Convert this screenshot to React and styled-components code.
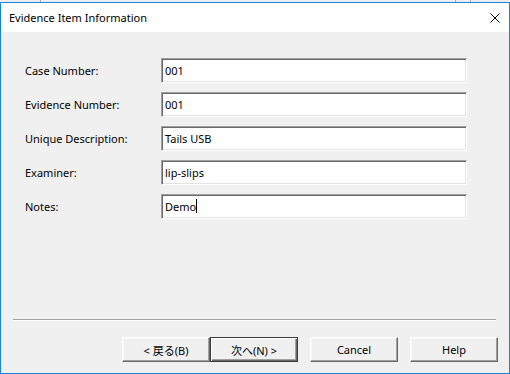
import React from "react";
import styled, { createGlobalStyle } from "styled-components";

const Global = createGlobalStyle`
  html, body { margin: 0; padding: 0; background: #f0f0f0; }
  * { box-sizing: border-box; }
`;

const UI_FONT = `"Noto Sans", "Noto Sans CJK JP", "Liberation Sans", sans-serif`;

const Page = styled.div`
  width: 510px;
  height: 374px;
  display: flex;
  flex-direction: column;
  background: #f0f0f0;
  overflow: hidden;
`;

const Backdrop = styled.div`
  height: 2px;
  display: flex;
  background: #eeeeee;
`;

const Tick = styled.span`
  width: 1px;
  height: 2px;
  margin-left: ${(p) => p.$ml}px;
  background: #a8a8a8;
`;

const Window = styled.div`
  flex: 1;
  display: flex;
  flex-direction: column;
  border: 1px solid #1883d7;
  background: #f0f0f0;
`;

const TitleBar = styled.div`
  height: 29px;
  flex: none;
  background: #ffffff;
  display: flex;
  align-items: center;
  justify-content: space-between;
  padding: 0 9px 0 8px;
`;

const Title = styled.span`
  font-family: ${UI_FONT};
  font-size: 11px;
  color: #000;
`;

const Close = styled.svg`
  width: 10px;
  height: 10px;
  display: block;
  margin-top: 1px;
`;

const Body = styled.div`
  flex: 1;
  display: flex;
  flex-direction: column;
`;

const Form = styled.div`
  flex: 1;
  display: grid;
  grid-template-columns: 136px 306px;
  grid-auto-rows: 25px;
  row-gap: 9px;
  align-content: start;
  padding: 26px 0 0 24px;
`;

const Label = styled.label`
  font-family: ${UI_FONT};
  font-size: 11px;
  color: #000;
  display: flex;
  align-items: center;
`;

const Field = styled.div`
  background: #ffffff;
  border-style: solid;
  border-width: 1px;
  border-color: #a0a0a0 #ffffff #ffffff #a0a0a0;
  box-shadow: inset 1px 1px 0 #696969, inset -1px -1px 0 #e3e3e3;
  display: flex;
  align-items: center;
  padding: 0 0 1px 3px;
  font-family: ${UI_FONT};
  font-size: 11px;
  color: #000;
`;

const Caret = styled.span`
  width: 1px;
  height: 14px;
  background: #000;
`;

const Separator = styled.div`
  height: 2px;
  margin: 0 13px 0 12px;
  border-top: 1px solid #a0a0a0;
  border-bottom: 1px solid #ffffff;
`;

const ButtonRow = styled.div`
  display: flex;
  justify-content: flex-end;
  padding: 16px 11px 11px 0;
`;

const Button = styled.button`
  width: 88px;
  height: 25px;
  margin-left: ${(p) => p.$gap || 0}px;
  padding: 0;
  background: #f0f0f0;
  font-family: ${UI_FONT};
  font-size: 11px;
  color: #000;
  border-style: solid;
  border-width: 1px;
  border-color: ${(p) => (p.$default ? "#3c3c3c" : "#ffffff #696969 #696969 #ffffff")};
  box-shadow: ${(p) =>
    p.$default
      ? "inset 1px 1px 0 #ffffff, inset -1px -1px 0 #696969, inset -2px -2px 0 #a0a0a0"
      : "inset -1px -1px 0 #a0a0a0, inset 1px 1px 0 #f8f8f8"};
  outline: none;
`;

const fields = [
  ["Case Number:", "001"],
  ["Evidence Number:", "001"],
  ["Unique Description:", "Tails USB"],
  ["Examiner:", "lip-slips"],
  ["Notes:", "Demo", true],
];

export default function App() {
  return (
    <Page>
      <Global />
      <Backdrop>
        <Tick $ml={40} />
        <Tick $ml={414} />
        <Tick $ml={14} />
      </Backdrop>
      <Window>
        <TitleBar>
          <Title>Evidence Item Information</Title>
          <Close viewBox="0 0 10 10">
            <path d="M0.5 0.5 L9.5 9.5 M9.5 0.5 L0.5 9.5" stroke="#000" strokeWidth="1" fill="none" />
          </Close>
        </TitleBar>
        <Body>
          <Form>
            {fields.map(([l, v, caret]) => (
              <React.Fragment key={l}>
                <Label>{l}</Label>
                <Field>
                  {v}
                  {caret && <Caret />}
                </Field>
              </React.Fragment>
            ))}
          </Form>
          <Separator />
          <ButtonRow>
            <Button>&lt; 戻る(B)</Button>
            <Button $default>次へ(N) &gt;</Button>
            <Button $gap={12}>Cancel</Button>
            <Button $gap={12}>Help</Button>
          </ButtonRow>
        </Body>
      </Window>
    </Page>
  );
}
